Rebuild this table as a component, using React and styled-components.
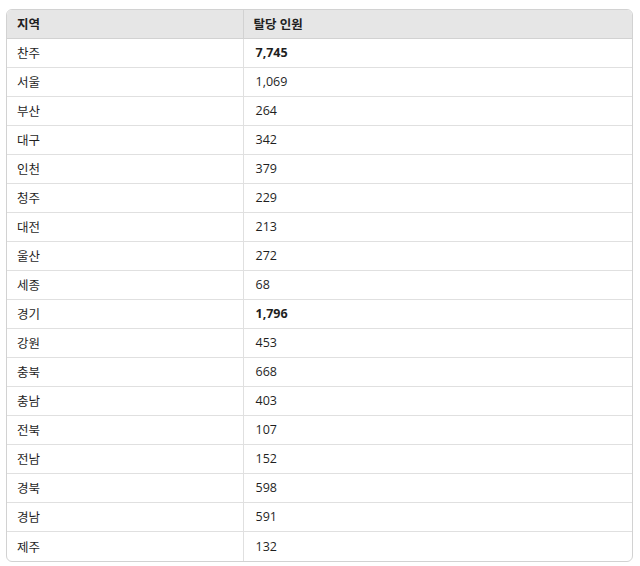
import React from 'react'
import styled, { createGlobalStyle } from 'styled-components'

const rows = [
    { region: '찬주', count: '7,745', bold: true },
    { region: '서울', count: '1,069' },
    { region: '부산', count: '264' },
    { region: '대구', count: '342' },
    { region: '인천', count: '379' },
    { region: '청주', count: '229' },
    { region: '대전', count: '213' },
    { region: '울산', count: '272' },
    { region: '세종', count: '68' },
    { region: '경기', count: '1,796', bold: true },
    { region: '강원', count: '453' },
    { region: '충북', count: '668' },
    { region: '충남', count: '403' },
    { region: '전북', count: '107' },
    { region: '전남', count: '152' },
    { region: '경북', count: '598' },
    { region: '경남', count: '591' },
    { region: '제주', count: '132' },
]

function App() {
    return (
        <>
            <GlobalStyle />
            <Page>
                <TableWrap>
                    <Table>
                        <thead>
                            <tr>
                                <HeadCell $first>지역</HeadCell>
                                <HeadCell>탈당 인원</HeadCell>
                            </tr>
                        </thead>
                        <tbody>
                            {rows.map((row, key) => (
                                <Row key={key}>
                                    <Cell $first>{row.region}</Cell>
                                    <Cell $bold={row.bold}>{row.count}</Cell>
                                </Row>
                            ))}
                        </tbody>
                    </Table>
                </TableWrap>
            </Page>
        </>
    )
}

export default App

const GlobalStyle = createGlobalStyle`
    body {
        margin: 0;
        background: #ffffff;
        font-family: 'Open Sans', 'Noto Sans CJK KR', sans-serif;
        color: #1f1f1f;
    }
`;

const Page = styled.div`
    padding: 9px 7px 0 6px;
`;

const TableWrap = styled.div`
    border: 1px solid #d2d2d2;
    border-radius: 6px;
    overflow: hidden;
`;

const Table = styled.table`
    width: 100%;
    border-collapse: collapse;
    font-size: 12.5px;
    table-layout: fixed;
`;

const HeadCell = styled.th`
    box-sizing: border-box;
    background: #e6e6e6;
    height: 28px;
    padding: 0 12px 0 10px;
    text-align: left;
    font-weight: 700;
    border-bottom: 1px solid #d2d2d2;
    border-left: ${p => (p.$first ? 'none' : '1px solid #d2d2d2')};
    width: ${p => (p.$first ? '236px' : 'auto')};
`;

const Row = styled.tr`
    &:not(:last-child) td {
        border-bottom: 1px solid #e0e0e0;
    }
    &:last-child td {
        height: 29px;
    }
`;

const Cell = styled.td`
    height: 28px;
    padding: 0 12px 0 ${p => (p.$first ? '10px' : '12px')};
    font-weight: ${p => (p.$bold ? 700 : 400)};
    border-left: ${p => (p.$first ? 'none' : '1px solid #e0e0e0')};
`;
